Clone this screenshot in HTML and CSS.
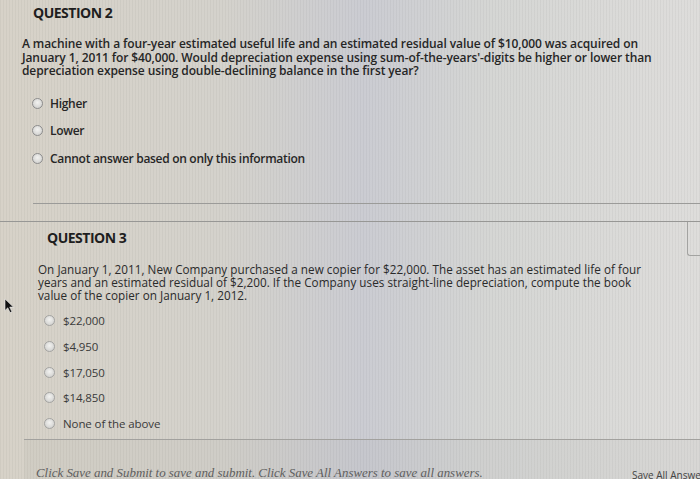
FILE: index.html
```html
<!DOCTYPE html>
<html lang="en">
<head>
<meta charset="utf-8">
<title>Test</title>
<link rel="stylesheet" href="styles.css">
</head>
<body>
<main class="page">
  <section class="q q2">
    <h2 class="q-title">QUESTION 2</h2>
    <p class="q-text">A machine with a four-year estimated useful life and an estimated residual value of $10,000 was acquired on January 1, 2011 for $40,000. Would depreciation expense using sum-of-the-years'-digits be higher or lower than depreciation expense using double-declining balance in the first year?</p>
    <ul class="options">
      <li class="opt"><span class="radio"></span>Higher</li>
      <li class="opt"><span class="radio"></span>Lower</li>
      <li class="opt"><span class="radio"></span>Cannot answer based on only this information</li>
    </ul>
  </section>
  <hr class="sep">
  <section class="q q3">
    <div class="q-head">
      <h2 class="q-title">QUESTION 3</h2>
      <div class="points-box"></div>
    </div>
    <p class="q-text">On January 1, 2011, New Company purchased a new copier for $22,000. The asset has an estimated life of four years and an estimated residual of $2,200. If the Company uses straight-line depreciation, compute the book value of the copier on January 1, 2012.</p>
    <ul class="options">
      <li class="opt"><span class="radio"></span>$22,000</li>
      <li class="opt"><span class="radio"></span>$4,950</li>
      <li class="opt"><span class="radio"></span>$17,050</li>
      <li class="opt"><span class="radio"></span>$14,850</li>
      <li class="opt"><span class="radio"></span>None of the above</li>
    </ul>
  </section>
  <footer class="foot">
    <p class="foot-note">Click Save and Submit to save and submit. Click Save All Answers to save all answers.</p>
    <span class="foot-btn">Save All Answers</span>
  </footer>
  <svg class="cursor" width="12" height="16" viewBox="0 0 12 16" aria-hidden="true">
    <path d="M1 1 L1 12.5 L3.8 9.8 L6 14.6 L7.9 13.8 L5.7 9.1 L9.4 9.1 Z" fill="#111" stroke="#eee" stroke-width="0.6"/>
  </svg>
</main>
</body>
</html>
```
FILE: styles.css
```css
html, body {
  margin: 0;
  padding: 0;
  overflow: hidden;
  height: 479px;
}
body {
  font-family: "Open Sans", "DejaVu Sans", sans-serif;
  color: #262626;
  background:
    repeating-linear-gradient(90deg, rgba(0,0,0,0.035) 0 1px, rgba(255,255,255,0) 1px 3px),
    linear-gradient(90deg, #d7d2c8 0%, #d4d2cc 32%, #cbccd2 52%, #d5d6d4 70%, #dedddb 100%);
}
.page {
  position: relative;
  width: 720px;
  height: 479px;
  display: flex;
  flex-direction: column;
}
.q-title {
  margin: 0;
  font-size: 14px;
  line-height: 18px;
  font-weight: 700;
  letter-spacing: -0.5px;
  color: #1e1e1e;
}
.q-text {
  margin: 0;
  font-size: 12px;
  line-height: 13.5px;
  letter-spacing: 0;
}
.options {
  list-style: none;
  margin: 0;
  padding: 0;
}
.opt {
  display: flex;
  align-items: center;
}
.radio {
  flex: 0 0 auto;
  width: 9px;
  height: 9px;
  border-radius: 50%;
  border: 1px solid #8d8d8d;
  background: radial-gradient(circle at 50% 40%, #f2f2f0 0%, #d6d6d4 70%, #bdbdbb 100%);
}

/* Question 2 */
.q2 {
  padding: 4px 0 0 22px;
}
.q2 .q-title {
  margin-left: 11px;
}
.q2 .q-text {
  margin-top: 15px;
  font-weight: 600;
  letter-spacing: -0.1px;
  width: 636px;
}
.q2 .options {
  margin-top: 12px;
  padding-left: 10px;
}
.q2 .opt {
  height: 27.5px;
  font-size: 12px;
  font-weight: 600;
  letter-spacing: -0.3px;
  gap: 7px;
}

.sep {
  margin: 31px 0 0 33px;
  border: 0;
  border-top: 1px solid #9b9b99;
  height: 0;
}

/* Question 3 */
.q3 {
  margin-top: 17px;
  border-top: 1px solid #979795;
  padding-left: 38px;
}
.q-head {
  display: flex;
  justify-content: space-between;
  align-items: flex-start;
}
.q3 .q-title {
  margin: 7px 0 0 9px;
}
.points-box {
  width: 32px;
  height: 33px;
  border-left: 1px solid #a3a3a1;
  border-bottom: 1px solid #a3a3a1;
  border-bottom-left-radius: 3px;
}
.q3 .q-text {
  margin-top: 7px;
  font-size: 11.7px;
  line-height: 13px;
  font-weight: 500;
  letter-spacing: 0.03px;
  color: #2a2a2a;
  width: 615px;
}
.q3 .options {
  margin-top: 6px;
  padding-left: 6px;
}
.q3 .opt {
  height: 25.7px;
  font-size: 11.5px;
  letter-spacing: -0.1px;
  color: #3a3a3a;
  gap: 8px;
}
.q3 .radio {
  border-color: #a4a4a2;
}

/* Footer */
.foot {
  margin: 3px 0 0 24px;
  border-top: 1px solid #a2a19e;
  background: rgba(0,0,0,0.025);
  flex: 1 1 auto;
  display: flex;
  align-items: flex-end;
  padding: 0 0 0 12px;
}
.foot-note {
  margin: 0 0 -2px;
  font-family: "Liberation Serif", "Times New Roman", serif;
  font-style: italic;
  font-size: 12.9px;
  line-height: 15px;
  color: #5e5e5e;
}
.foot-btn {
  margin: 0 0 -3px auto;
  font-size: 10px;
  line-height: 14px;
  color: #444;
  white-space: nowrap;
  width: 88px;
}

.cursor {
  position: absolute;
  left: 4px;
  top: 298px;
}
```
